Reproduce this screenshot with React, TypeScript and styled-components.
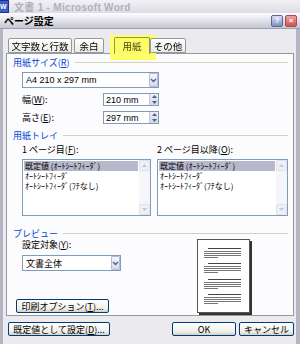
import React from "react";
import styled, { createGlobalStyle } from "styled-components";

const GlobalStyle = createGlobalStyle`
  html, body {
    margin: 0;
    padding: 0;
    background: #ebebef;
  }
  body {
    font-family: "Liberation Sans", "Noto Sans CJK JP", sans-serif;
    font-size: 9px;
    color: #000;
  }
  u {
    text-decoration: underline;
    text-underline-offset: 1px;
  }
`;

const Window = styled.div`
  width: 300px;
  height: 344px;
  overflow: hidden;
  background: #ebebef;
`;

const WordBar = styled.div`
  height: 13px;
  display: flex;
  align-items: center;
  gap: 5px;
  background: linear-gradient(#f2f2f6, #dcdce4);
  color: #b0b0ba;
  font-size: 10px;
  font-weight: bold;
  letter-spacing: 0.3px;
`;

const WordIcon = styled.div`
  width: 9px;
  height: 11px;
  background: #3a5fc8;
  border: 1px solid #20308a;
  color: #fff;
  font-size: 7px;
  line-height: 11px;
  text-align: center;
  margin-left: -2px;
`;

const Dialog = styled.div`
  display: flex;
  flex-direction: column;
  height: 331px;
  border-left: 3px solid #b4b4c2;
  border-right: 4px solid #b4b4c2;
  box-sizing: border-box;
`;

const TitleBar = styled.div`
  height: 15px;
  display: flex;
  align-items: center;
  justify-content: space-between;
  margin-left: -3px;
  margin-right: -4px;
  padding: 0 3px 0 4px;
  background: linear-gradient(#fdfdff 0%, #e4e4ec 45%, #c6c6d2 100%);
  border-bottom: 1px solid #a0a0b0;
  font-size: 10px;
  font-weight: bold;
`;

const TitleButtons = styled.div`
  display: flex;
  gap: 2px;
`;

const CaptionButton = styled.div<{ $close?: boolean }>`
  width: 10px;
  height: 10px;
  border-radius: 2px;
  border: 1px solid ${(p) => (p.$close ? "#a05050" : "#5a6890")};
  background: ${(p) =>
    p.$close
      ? "linear-gradient(#f0a0a0, #d85050)"
      : "linear-gradient(#d8e0f4, #8090c0)"};
  color: #fff;
  font-size: 8px;
  line-height: 10px;
  text-align: center;
  font-weight: bold;
`;

const Body = styled.div`
  flex: 1;
  display: flex;
  flex-direction: column;
  padding: 6px 2px 0 3px;
`;

const TabRow = styled.div`
  display: flex;
  align-items: flex-end;
  height: 18px;
  padding-left: 2px;
  position: relative;
  z-index: 1;
`;

const Tab = styled.div<{ $active?: boolean; $w: number }>`
  position: relative;
  width: ${(p) => p.$w}px;
  height: ${(p) => (p.$active ? 17 : 15)}px;
  margin-right: ${(p) => (p.$active ? 0 : 2)}px;
  margin-left: ${(p) => (p.$active ? 8 : 0)}px;
  box-sizing: border-box;
  border: 1px solid #919b9c;
  border-bottom: ${(p) => (p.$active ? "none" : "1px solid #919b9c")};
  border-radius: 2px 2px 0 0;
  background: ${(p) =>
    p.$active ? "#fcfcfe" : "linear-gradient(#ffffff, #ecebe6)"};
  color: ${(p) => (p.$active ? "#4a4a20" : "#000")};
  font-family: "Noto Sans CJK JP", sans-serif;
  font-size: 9.5px;
  display: flex;
  align-items: center;
  justify-content: center;
  padding-top: ${(p) => (p.$active ? 0 : 1)}px;
  ${(p) =>
    p.$active &&
    `
    margin-bottom: -1px;
    &::after {
      content: "";
      position: absolute;
      left: -5px;
      right: -7px;
      top: -3px;
      height: 25px;
      background: #ffff6a;
      mix-blend-mode: multiply;
      pointer-events: none;
    }
  `}
`;

const Panel = styled.div`
  height: 263px;
  box-sizing: border-box;
  border: 1px solid #919b9c;
  background: #fcfcfe;
  padding: 3px 5px 0 6px;
  display: flex;
  flex-direction: column;
`;

const GroupHeader = styled.div<{ $mt?: number }>`
  display: flex;
  align-items: center;
  gap: 5px;
  height: 10px;
  margin-top: ${(p) => p.$mt ?? 0}px;
  color: #0046d5;
  font-family: "Noto Sans CJK JP", sans-serif;
  white-space: nowrap;
  &::after {
    content: "";
    flex: 1;
    height: 1px;
    background: #d0d0bf;
  }
`;

const Indent = styled.div<{ $mt?: number }>`
  margin-left: 9px;
  margin-top: ${(p) => p.$mt ?? 0}px;
`;

const Combo = styled.div<{ $w: number; $mt?: number }>`
  width: ${(p) => p.$w}px;
  height: 16px;
  margin-top: ${(p) => p.$mt ?? 0}px;
  box-sizing: border-box;
  border: 1px solid #7f9db9;
  background: #fff;
  display: flex;
  align-items: center;
  justify-content: space-between;
  padding-left: 3px;
  font-family: "Liberation Sans", "Noto Sans CJK JP", sans-serif;
`;

const DropButton = styled.div`
  width: 9px;
  height: 14px;
  box-sizing: border-box;
  border: 1px solid #b0bcd8;
  border-radius: 1px;
  background: linear-gradient(#f4f6fc, #d4dcf0);
  display: flex;
  align-items: center;
  justify-content: center;
`;

const FieldRow = styled.div<{ $mt?: number }>`
  display: flex;
  align-items: center;
  justify-content: space-between;
  width: 137px;
  height: 13px;
  margin-top: ${(p) => p.$mt ?? 0}px;
  font-family: "Noto Sans CJK JP", sans-serif;
`;

const Spin = styled.div`
  width: 56px;
  height: 13px;
  box-sizing: border-box;
  border: 1px solid #7f9db9;
  background: #fff;
  display: flex;
  align-items: center;
  justify-content: space-between;
  padding-left: 2px;
  font-family: "Liberation Sans", sans-serif;
`;

const SpinButtons = styled.div`
  width: 8px;
  height: 11px;
  display: flex;
  flex-direction: column;
  background: linear-gradient(#eef0f8, #d2d8ea);
  border-left: 1px solid #c0c8dc;
  align-items: center;
  justify-content: space-around;
`;

const TrayGrid = styled.div`
  display: grid;
  grid-template-columns: 129px 131px;
  column-gap: 6px;
  margin-left: 9px;
  margin-top: 5px;
`;

const TrayLabel = styled.div`
  height: 10px;
  line-height: 10px;
  margin-bottom: 4px;
  font-family: "Noto Sans CJK JP", sans-serif;
  white-space: nowrap;
`;

const ListBox = styled.div`
  height: 57px;
  box-sizing: border-box;
  border: 1px solid #7f9db9;
  background: #fff;
  display: flex;
`;

const ListItems = styled.div`
  flex: 1;
  padding: 1px 1px 0 1px;
  font-family: "Noto Sans CJK JP", sans-serif;
  font-size: 8px;
  overflow: hidden;
`;

const ListItem = styled.div<{ $selected?: boolean }>`
  height: 10px;
  line-height: 10px;
  white-space: nowrap;
  padding-left: 1px;
  background: ${(p) => (p.$selected ? "#b8b8cc" : "transparent")};
`;

const ScrollBar = styled.div`
  width: 11px;
  display: flex;
  flex-direction: column;
  justify-content: space-between;
  background: #f6f6fa;
`;

const ScrollArrow = styled.div`
  height: 11px;
  box-sizing: border-box;
  border: 1px solid #dde2ee;
  border-radius: 2px;
  background: #eef0f8;
  display: flex;
  align-items: center;
  justify-content: center;
`;

const PreviewGrid = styled.div`
  display: grid;
  grid-template-columns: 1fr 93px;
  margin-top: 1px;
  flex: 1;
`;

const PreviewLeft = styled.div`
  display: flex;
  flex-direction: column;
  padding-left: 9px;
  padding-top: 1px;
`;

const PlainLabel = styled.div`
  height: 10px;
  line-height: 10px;
  font-family: "Noto Sans CJK JP", sans-serif;
`;

const Button = styled.div<{ $w: number; $mt?: number; $ml?: number }>`
  width: ${(p) => p.$w}px;
  height: 14px;
  box-sizing: border-box;
  margin-top: ${(p) => p.$mt ?? 0}px;
  margin-left: ${(p) => p.$ml ?? 0}px;
  border: 1px solid #003c74;
  border-radius: 2px;
  background: linear-gradient(#ffffff 0%, #f0f0ea 70%, #d6d0c5 100%);
  display: flex;
  align-items: center;
  justify-content: center;
  font-family: "Noto Sans CJK JP", sans-serif;
  font-size: 9px;
  white-space: nowrap;
`;

const Page = styled.div`
  margin-left: 2px;
  width: 55px;
  height: 76px;
`;

const Footer = styled.div`
  display: flex;
  align-items: center;
  margin-top: 6px;
  padding-left: 2px;
`;

const Spacer = styled.div`
  flex: 1;
`;

const Chevron = () => (
  <svg width="7" height="5" viewBox="0 0 7 5">
    <path d="M1 1 L3.5 3.5 L6 1" fill="none" stroke="#4d6185" strokeWidth="1.4" />
  </svg>
);

const Arrow = ({ up, color = "#4d6185" }: { up?: boolean; color?: string }) => (
  <svg width="5" height="3" viewBox="0 0 5 3">
    <path d={up ? "M0 3 L2.5 0 L5 3 Z" : "M0 0 L2.5 3 L5 0 Z"} fill={color} />
  </svg>
);

const trayItems = [
  "既定値 (ｵｰﾄｼｰﾄﾌｨｰﾀﾞ)",
  "ｵｰﾄｼｰﾄﾌｨｰﾀﾞ",
  "ｵｰﾄｼｰﾄﾌｨｰﾀﾞ(ﾌﾁなし)",
];

const Tray = ({ label }: { label: React.ReactNode }) => (
  <div>
    <TrayLabel>{label}</TrayLabel>
    <ListBox>
      <ListItems>
        {trayItems.map((t, i) => (
          <ListItem key={t} $selected={i === 0}>
            {t}
          </ListItem>
        ))}
      </ListItems>
      <ScrollBar>
        <ScrollArrow>
          <Arrow up color="#c0c8dc" />
        </ScrollArrow>
        <ScrollArrow>
          <Arrow color="#c0c8dc" />
        </ScrollArrow>
      </ScrollBar>
    </ListBox>
  </div>
);

const PagePreview = () => {
  const blocks = [9, 24, 40, 55];
  return (
    <svg width="55" height="76" viewBox="0 0 55 76">
      <rect x="2" y="2" width="53" height="74" fill="#333" />
      <rect x="0.5" y="0.5" width="52" height="73" fill="#fff" stroke="#555" />
      {blocks.map((b) => (
        <g key={b} stroke="#777" strokeWidth="1">
          <line x1="11" x2="44" y1={b + 0.5} y2={b + 0.5} stroke="#444" />
          <line x1="7" x2="44" y1={b + 3.5} y2={b + 3.5} />
          <line x1="7" x2="44" y1={b + 5.5} y2={b + 5.5} />
          <line x1="7" x2="44" y1={b + 7.5} y2={b + 7.5} />
          <line x1="7" x2="21" y1={b + 9.5} y2={b + 9.5} />
        </g>
      ))}
    </svg>
  );
};

const App = () => {
  return (
    <>
      <GlobalStyle />
      <Window>
        <WordBar>
          <WordIcon>W</WordIcon>
          <span>文書 1 - Microsoft Word</span>
        </WordBar>
        <Dialog>
          <TitleBar>
            <span>ページ設定</span>
            <TitleButtons>
              <CaptionButton>?</CaptionButton>
              <CaptionButton $close>×</CaptionButton>
            </TitleButtons>
          </TitleBar>
          <Body>
            <TabRow>
              <Tab $w={64}>文字数と行数</Tab>
              <Tab $w={30}>余白</Tab>
              <Tab $w={36} $active>
                用紙
              </Tab>
              <Tab $w={36}>その他</Tab>
            </TabRow>
            <Panel>
              <GroupHeader>
                <span>
                  用紙サイズ(<u>R</u>)
                </span>
              </GroupHeader>
              <Indent $mt={5}>
                <Combo $w={137}>
                  <span>A4 210 x 297 mm</span>
                  <DropButton>
                    <Chevron />
                  </DropButton>
                </Combo>
              </Indent>
              <Indent $mt={5}>
                <FieldRow>
                  <span>
                    幅(<u>W</u>):
                  </span>
                  <Spin>
                    <span>210 mm</span>
                    <SpinButtons>
                      <Arrow up />
                      <Arrow />
                    </SpinButtons>
                  </Spin>
                </FieldRow>
                <FieldRow $mt={5}>
                  <span>
                    高さ(<u>E</u>):
                  </span>
                  <Spin>
                    <span>297 mm</span>
                    <SpinButtons>
                      <Arrow up />
                      <Arrow />
                    </SpinButtons>
                  </Spin>
                </FieldRow>
              </Indent>
              <GroupHeader $mt={6}>
                <span>用紙トレイ</span>
              </GroupHeader>
              <TrayGrid>
                <Tray
                  label={
                    <>
                      1 ページ目(<u>F</u>):
                    </>
                  }
                />
                <Tray
                  label={
                    <>
                      2 ページ目以降(<u>O</u>):
                    </>
                  }
                />
              </TrayGrid>
              <GroupHeader $mt={12}>
                <span>プレビュー</span>
              </GroupHeader>
              <PreviewGrid>
                <PreviewLeft>
                  <PlainLabel>
                    設定対象(<u>Y</u>):
                  </PlainLabel>
                  <Combo $w={99} $mt={5}>
                    <span>文書全体</span>
                    <DropButton>
                      <Chevron />
                    </DropButton>
                  </Combo>
                  <Button $w={93} $mt={28} $ml={-6}>
                    印刷オプション(<u>T</u>)...
                  </Button>
                </PreviewLeft>
                <Page>
                  <PagePreview />
                </Page>
              </PreviewGrid>
            </Panel>
            <Footer>
              <Button $w={102}>
                既定値として設定(<u>D</u>)...
              </Button>
              <Spacer />
              <Button $w={64}>OK</Button>
              <Button $w={55} $ml={3}>
                キャンセル
              </Button>
            </Footer>
          </Body>
        </Dialog>
      </Window>
    </>
  );
};

export default App;
